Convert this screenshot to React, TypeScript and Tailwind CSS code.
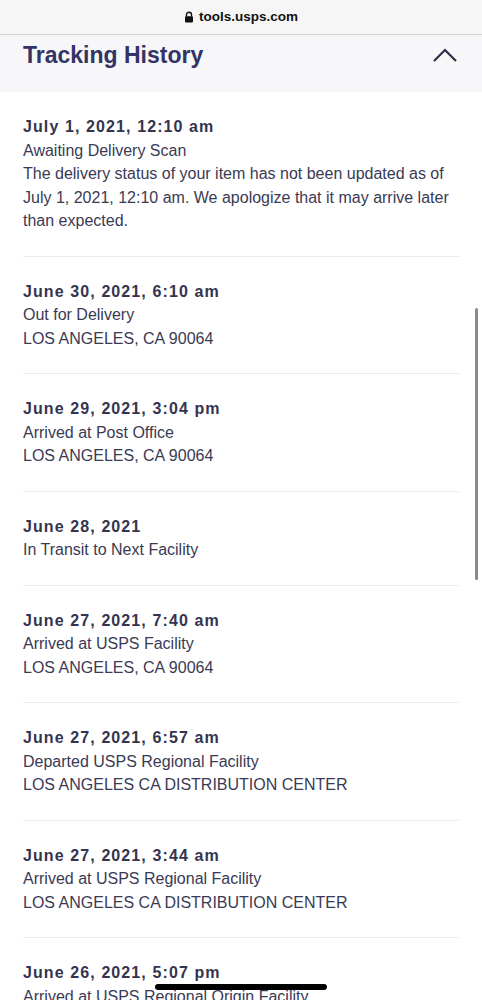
const events = [
  {
    date: 'July 1, 2021, 12:10 am',
    lines: [
      'Awaiting Delivery Scan',
      'The delivery status of your item has not been updated as of July 1, 2021, 12:10 am. We apologize that it may arrive later than expected.',
    ],
  },
  { date: 'June 30, 2021, 6:10 am', lines: ['Out for Delivery', 'LOS ANGELES, CA 90064'] },
  { date: 'June 29, 2021, 3:04 pm', lines: ['Arrived at Post Office', 'LOS ANGELES, CA 90064'] },
  { date: 'June 28, 2021', lines: ['In Transit to Next Facility'] },
  { date: 'June 27, 2021, 7:40 am', lines: ['Arrived at USPS Facility', 'LOS ANGELES, CA 90064'] },
  {
    date: 'June 27, 2021, 6:57 am',
    lines: ['Departed USPS Regional Facility', 'LOS ANGELES CA DISTRIBUTION CENTER'],
  },
  {
    date: 'June 27, 2021, 3:44 am',
    lines: ['Arrived at USPS Regional Facility', 'LOS ANGELES CA DISTRIBUTION CENTER'],
  },
  {
    date: 'June 26, 2021, 5:07 pm',
    lines: ['Arrived at USPS Regional Origin Facility', 'LOS ANGELES CA DISTRIBUTION CENTER'],
  },
];

function Lock() {
  return (
    <svg width="10" height="12" viewBox="0 0 10 12" className="mr-[5px]">
      <path d="M2.5 5.5V3.8a2.5 2.5 0 0 1 5 0v1.7" fill="none" stroke="#111" strokeWidth="1.4" />
      <rect x="1" y="5.2" width="8" height="6.3" rx="1" fill="#111" />
    </svg>
  );
}

export default function App() {
  return (
    <div className="relative w-[482px] h-[1000px] overflow-hidden bg-white font-['Liberation_Sans',Arial,sans-serif]">
      <div className="h-[35px] bg-[#f6f6f6] border-b border-[#d2d2d2] flex items-center justify-center">
        <Lock />
        <span className="text-[13.5px] font-bold text-[#111]">tools.usps.com</span>
      </div>

      <div className="h-[57px] bg-[#f7f7f9] px-[23px] pt-[6px] flex items-start justify-between">
        <h2 className="text-[23px] leading-[28px] font-bold text-[#333366]">Tracking History</h2>
        <svg width="26" height="16" viewBox="0 0 26 16" className="mt-[6px] mr-[1px]">
          <polyline points="2,14 13,3 24,14" fill="none" stroke="#2e2e48" strokeWidth="2.2" />
        </svg>
      </div>

      <div className="px-[23px]">
        {events.map((ev, i) => (
          <div key={i} className="py-[23px] border-b border-[#ebebeb] text-[16px] leading-[23.5px] text-[#3a3a55]">
            <div className="font-bold tracking-[1.1px] text-[#34344f]">{ev.date}</div>
            {ev.lines.map((l, j) => (
              <div key={j}>{l}</div>
            ))}
          </div>
        ))}
      </div>

      <div className="absolute right-[4px] top-[308px] w-[3px] h-[272px] rounded-full bg-[#8a8a8a]" />
      <div className="absolute left-[155px] top-[984px] w-[172px] h-[6px] rounded-full bg-black" />
    </div>
  );
}
